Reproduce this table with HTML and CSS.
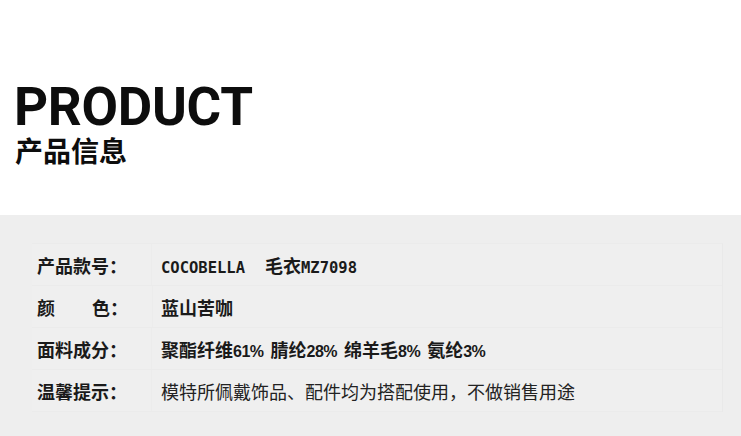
FILE: index.html
```html
<!DOCTYPE html>
<html lang="zh-CN">
<head>
<meta charset="utf-8">
<link rel="stylesheet" href="styles.css">
</head>
<body>
<header class="head">
  <h1 class="title-en">PRODUCT</h1>
  <h2 class="title-cn">产品信息</h2>
</header>
<section class="info">
  <div class="table">
    <div class="row">
      <div class="label">产品款号：</div>
      <div class="value bold"><span class="mono">COCOBELLA</span><span class="gap"></span>毛衣<span class="mono">MZ7098</span></div>
    </div>
    <div class="row">
      <div class="label spread"><span>颜</span><span>色：</span></div>
      <div class="value bold">蓝山苦咖</div>
    </div>
    <div class="row">
      <div class="label">面料成分：</div>
      <div class="value bold">聚酯纤维<span class="num">61%</span><span class="sp"></span>腈纶<span class="num">28%</span><span class="sp"></span>绵羊毛<span class="num">8%</span><span class="sp"></span>氨纶<span class="num">3%</span></div>
    </div>
    <div class="row">
      <div class="label">温馨提示：</div>
      <div class="value">模特所佩戴饰品、配件均为搭配使用，不做销售用途</div>
    </div>
  </div>
</section>
</body>
</html>
```
FILE: styles.css
```css
* { box-sizing: border-box; }
html, body { margin: 0; padding: 0; }
body {
  width: 741px;
  height: 436px;
  overflow: hidden;
  background: #ffffff;
  font-family: "Noto Sans CJK SC", "Noto Sans", sans-serif;
  color: #111;
}
.head {
  height: 215px;
  padding: 79px 0 0 14px;
}
.title-en {
  margin: 0;
  font-family: Roboto, "Liberation Sans", sans-serif;
  font-weight: 700;
  font-size: 53px;
  line-height: 56px;
  letter-spacing: -0.3px;
  color: #0d0d0d;
}
.title-cn {
  margin: 0 0 0 1px;
  font-family: "Noto Sans CJK SC", sans-serif;
  font-weight: 700;
  font-size: 28px;
  line-height: 30px;
  color: #0d0d0d;
}
.info {
  height: 221px;
  background: #eeeeee;
  padding: 28px 18px 0 32px;
}
.table {
  background: #efefef;
  border-top: 1px solid #ebebeb;
  border-right: 1px solid #e9e9e9;
}
.row {
  display: grid;
  grid-template-columns: 120px 1fr;
  height: 42px;
  align-items: center;
  border-bottom: 1px solid #ebebeb;
}
.label {
  padding-left: 5px;
  font-weight: 700;
  font-size: 18px;
  color: #1a1a1a;
  height: 100%;
  display: flex;
  align-items: center;
  border-right: 1px solid #ececec;
}
.label.spread {
  justify-content: space-between;
  width: 91px;
  box-sizing: content-box;
  padding-right: 24px;
}
.value {
  padding-left: 9px;
  font-size: 18px;
  color: #222;
  white-space: nowrap;
}
.value.bold { font-weight: 700; color: #1a1a1a; }
.mono {
  font-family: "DejaVu Sans Mono", monospace;
  font-size: 15.5px;
  font-weight: 700;
}
.gap { display: inline-block; width: 20px; }
.sp { display: inline-block; width: 7px; }
.num {
  font-family: "Liberation Sans", Arial, sans-serif;
  font-weight: 700;
  font-size: 16px;
  letter-spacing: -0.5px;
}
```
